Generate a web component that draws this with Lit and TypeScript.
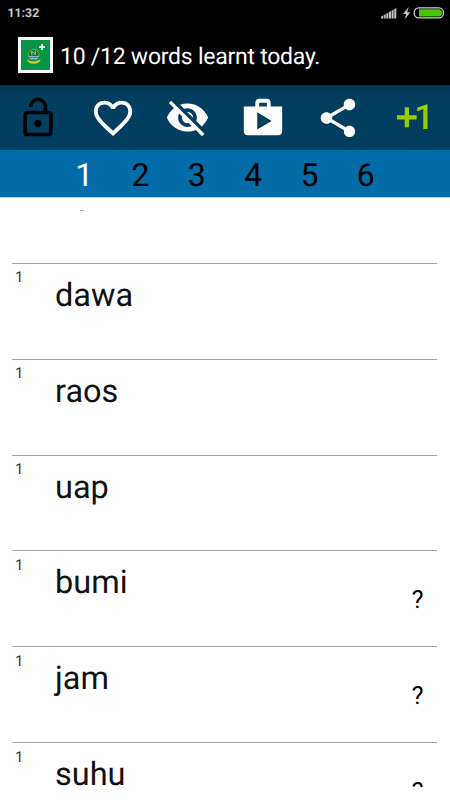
import { LitElement, html, css, svg } from "lit";
import { customElement } from "lit/decorators.js";

interface Word {
  text: string;
  hint: boolean;
}

const WORDS: Word[] = [
  { text: "dawa", hint: false },
  { text: "raos", hint: false },
  { text: "uap", hint: false },
  { text: "bumi", hint: true },
  { text: "jam", hint: true },
  { text: "suhu", hint: true },
];

const ICONS = [
  { cls: "lock", d: "M12 17c1.1 0 2-.9 2-2s-.9-2-2-2-2 .9-2 2 .9 2 2 2zm6-9h-1V6c0-2.76-2.24-5-5-5S7 3.24 7 6h1.9c0-1.71 1.39-3.1 3.1-3.1s3.1 1.39 3.1 3.1v2H6c-1.1 0-2 .9-2 2v10c0 1.1.9 2 2 2h12c1.1 0 2-.9 2-2V10c0-1.1-.9-2-2-2zm0 12H6V10h12v10z" },
  { cls: "heart", d: "M16.5 3c-1.74 0-3.41.81-4.5 2.09C10.91 3.81 9.24 3 7.5 3 4.42 3 2 5.42 2 8.5c0 3.78 3.4 6.86 8.55 11.54L12 21.35l1.45-1.32C18.6 15.36 22 12.28 22 8.5 22 5.42 19.58 3 16.5 3zm-4.4 15.55l-.1.1-.1-.1C7.14 14.24 4 11.39 4 8.5 4 6.5 5.5 5 7.5 5c1.54 0 3.04.99 3.57 2.36h1.87C13.46 5.99 14.96 5 16.5 5c2 0 3.5 1.5 3.5 3.5 0 2.89-3.14 5.74-7.9 10.05z" },
  { cls: "eye", d: "M12 7c2.76 0 5 2.24 5 5 0 .65-.13 1.26-.36 1.83l2.92 2.92c1.51-1.26 2.7-2.89 3.43-4.75-1.73-4.39-6-7.5-11-7.5-1.4 0-2.74.25-3.98.7l2.16 2.16C10.74 7.13 11.35 7 12 7zM2 4.27l2.28 2.28.46.46C3.08 8.3 1.78 10.02 1 12c1.73 4.39 6 7.5 11 7.5 1.55 0 3.03-.3 4.38-.84l.42.42L19.73 22 21 20.73 3.27 3 2 4.27zM7.53 9.8l1.55 1.55c-.05.21-.08.43-.08.65 0 1.66 1.34 3 3 3 .22 0 .44-.03.65-.08l1.55 1.55c-.67.33-1.41.53-2.2.53-2.76 0-5-2.24-5-5 0-.79.2-1.53.53-2.2zm4.31-.78l3.15 3.15.02-.16c0-1.66-1.34-3-3-3l-.17.01z" },
  { cls: "shop", d: "M16 6V4c0-1.11-.89-2-2-2h-4c-1.11 0-2 .89-2 2v2H2v13c0 1.11.89 2 2 2h16c1.11 0 2-.89 2-2V6h-6zm-6-2h4v2h-4V4zM9 18V9l7.5 4.5L9 18z" },
  { cls: "share", d: "M18 16.08c-.76 0-1.44.3-1.96.77L8.91 12.7c.05-.23.09-.46.09-.7s-.04-.47-.09-.7l7.05-4.11c.54.5 1.25.81 2.04.81 1.66 0 3-1.34 3-3s-1.34-3-3-3-3 1.34-3 3c0 .24.04.47.09.7L8.04 9.81C7.5 9.31 6.79 9 6 9c-1.66 0-3 1.34-3 3s1.34 3 3 3c.79 0 1.5-.31 2.04-.81l7.12 4.16c-.05.21-.08.43-.08.65 0 1.61 1.31 2.92 2.92 2.92s2.92-1.31 2.92-2.92-1.31-2.92-2.92-2.92z" },
];

@customElement("word-row")
class WordRow extends LitElement {
  static properties = { word: { attribute: false } };
  declare word: Word;

  static styles = css`
    :host {
      display: flex;
      box-sizing: border-box;
      height: 95.85px;
      flex: none;
      margin: 0 13px 0 12px;
      border-top: 1px solid #a4a4a4;
      color: #111;
    }
    .level {
      width: 43px;
      padding: 4.5px 0 0 3px;
      box-sizing: border-box;
      font-size: 15px;
      line-height: 18px;
      color: #333;
    }
    .text {
      flex: 1;
      padding-top: 11px;
      font-size: 32.5px;
      line-height: 40px;
    }
    .hint {
      padding: 34px 13.5px 0 0;
      font-size: 25px;
      line-height: 31px;
      color: #000;
    }
  `;

  render() {
    return html`<span class="level">1</span>
      <span class="text">${this.word.text}</span>
      ${this.word.hint ? html`<span class="hint">?</span>` : ""}`;
  }
}

@customElement("app-root")
class AppRoot extends LitElement {
  static styles = css`
    :host {
      display: flex;
      flex-direction: column;
      width: 450px;
      height: 800px;
      overflow: hidden;
      background: #fff;
      font-family: Roboto, sans-serif;
      text-rendering: geometricPrecision;
    }
    svg { display: block; }
    .status {
      display: flex;
      align-items: center;
      justify-content: space-between;
      height: 25px;
      padding: 0 5px 0 7.5px;
      background: #000;
      color: #c8c8c8;
      font-size: 12.3px;
      font-weight: 700;
    }
    .status span { padding-top: 2px; }
    .title {
      display: flex;
      align-items: center;
      gap: 7px;
      height: 60px;
      padding: 0 0 0 18px;
      background: #000;
      color: #fff;
      font-size: 23px;
      letter-spacing: -0.25px;
    }
    .title span { padding-top: 2px; }
    .tools {
      display: grid;
      grid-template-columns: repeat(6, 75px);
      place-items: center;
      height: 65px;
      background: linear-gradient(#023755 0, #023e60 14px, #023e60 64px, #02395a 65px);
      color: #fff;
    }
    .icon { width: 46px; height: 46px; fill: currentColor; }
    .lock { width: 44px; height: 44px; color: #000; }
    .eye { width: 45px; height: 45px; }
    .plus { width: 39px; height: 47px; overflow: visible; }
    .plus text {
      font-family: Roboto, sans-serif;
      font-weight: 500;
      fill: #99cc00;
    }
    .tabs {
      display: grid;
      grid-template-columns: repeat(6, 56.3px);
      justify-content: center;
      height: 47px;
      box-sizing: border-box;
      background: #026ca9;
      font-size: 32px;
      line-height: 50px;
      text-align: center;
      color: #000;
    }
    .active { color: #fff; }
    .list {
      display: flex;
      flex-direction: column;
      height: 590px;
      overflow: hidden;
    }
    .rest {
      flex: none;
      height: 65.9px;
      padding: 12px 0 0 80px;
      box-sizing: border-box;
      border-top: 1px solid #c3c6dc;
    }
    .tail { width: 4px; height: 1px; background: #b5b5b5; }
  `;

  render() {
    return html`
      <div class="status">
        <span>11:32</span>
        <svg width="65" height="18" viewBox="0 0 65 18">
          <g fill="#c4c4c4">
            ${[0, 1, 2, 3, 4, 5].map(
              (i) => svg`<path d="M${1 + i * 2.65} ${12.7 - i * 1.5}l2-1.200V14.500h-2z"/>`
            )}
            <path d="M28.600 3l-5.600 7h3.200l-1.600 5.600L30.400 8.200h-3.200z" />
          </g>
          <rect x="34.2" y="3.8" width="29.2" height="10" rx="4.6" fill="#000" stroke="#d0d0d0" stroke-width="1.3" />
          <path d="M39 5.200h19.500a3.600 3.600 0 0 1 0 7.200H39z" fill="#48c60c" />
        </svg>
      </div>
      <div class="title">
        <svg width="35" height="36" viewBox="0 0 35 36">
          <path fill="#fff" d="M0 0h35v36H0z" />
          <path fill="#069447" d="M3 3h29v30H3z" />
          <path fill="#fff" d="M23.100 7.200h1.900v2h2v1.900h-2v2h-1.900v-2h-2V9.200h2z" />
          <circle cx="15.700" cy="17.500" r="5.200" fill="#087337" stroke="#b5a33a" stroke-width=".8" />
          <path d="M13.800 18v-4l3.500 3.500v-4" fill="none" stroke="#9ecbb0" stroke-width="1" />
          <path fill="#3688bd" d="M10.500 19.500h10.400l-2 3.700h-6.500z" />
          <path d="M10.500 19.400h10.400M12 21.600h7.500" stroke="#c5dedb" stroke-width=".7" />
          <path d="M9 21.800q2 2.700 6.700 2.700t6.700-2.700l-.4 2.500q-2.300 2.500-6.300 2.500t-6.300-2.500z" fill="#d8cd16" />
        </svg>
        <span>10 /12 words learnt today.</span>
      </div>
      <div class="tools">
        ${ICONS.map((i) => html`<svg class="icon ${i.cls}" viewBox="0 0 24 24"><path d=${i.d} /></svg>`)}
        <svg class="plus" viewBox="0 0 39 47">
          <path d="M11.700 13.300H16v7.900h7.700v4.400H16v7.700h-4.300v-7.700H4v-4.400h7.700z" fill="#99cc00" />
          <text x="21.300" y="35" font-size="34.700">1</text>
        </svg>
      </div>
      <div class="tabs">
        ${[1, 2, 3, 4, 5, 6].map((n) => html`<span class=${n === 1 ? "active" : ""}>${n}</span>`)}
      </div>
      <div class="list">
        <div class="rest"><div class="tail"></div></div>
        ${WORDS.map((w) => html`<word-row .word=${w}></word-row>`)}
      </div>
    `;
  }
}
